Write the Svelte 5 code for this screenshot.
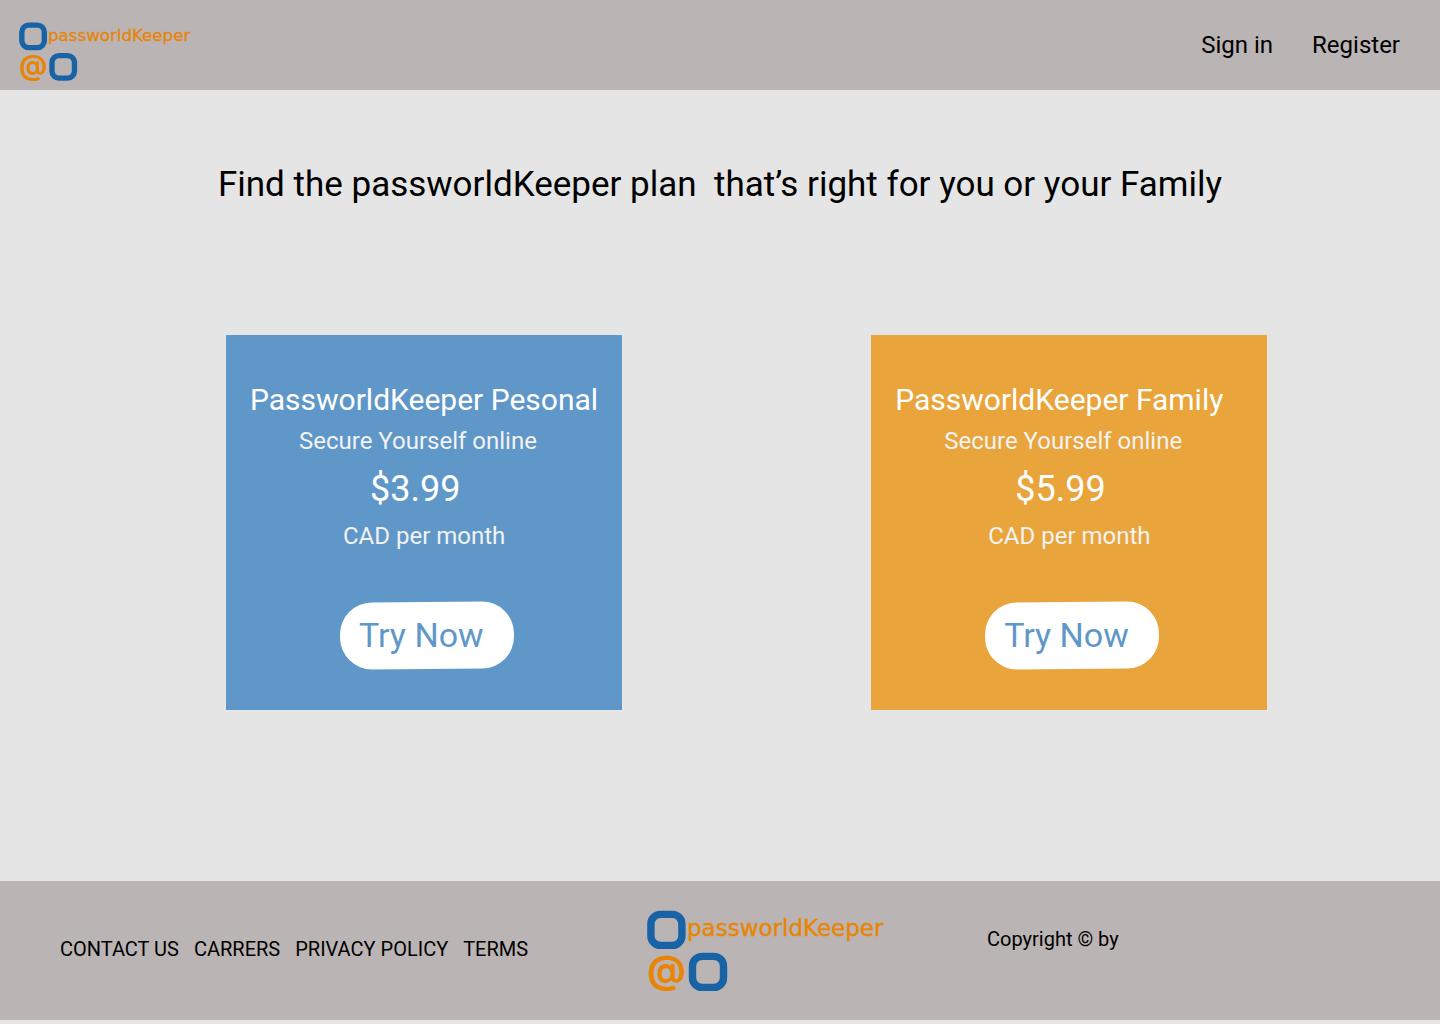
<script>
  const plans = [
    { id: 'personal', name: 'PassworldKeeper Pesonal', price: '$3.99' },
    { id: 'family', name: 'PassworldKeeper Family', price: '$5.99' },
  ];
  const footerLinks = ['CONTACT US', 'CARRERS', 'PRIVACY POLICY', 'TERMS'];
</script>

{#snippet logo()}
  <svg class="logo" viewBox="0 0 240 82" role="img" aria-label="passworldKeeper">
    <g fill="none" stroke="#1763a6" stroke-width="7.4">
      <rect x="3.9" y="4.4" width="31" height="31" rx="9.5" />
      <rect x="45.5" y="46.4" width="31" height="31" rx="9.5" />
    </g>
    <text class="at" x="19.5" y="73" text-anchor="middle">@</text>
    <text class="word" x="40" y="26">passworldKeeper</text>
  </svg>
{/snippet}

<div class="page">
  <header>
    <a class="brand" href="#home">{@render logo()}</a>
    <nav aria-label="Account">
      <a href="#signin">Sign in</a>
      <a href="#register">Register</a>
    </nav>
  </header>

  <main>
    <h1>Find the passworldKeeper plan&nbsp; that’s right for you or your Family</h1>
    <div class="plans">
      {#each plans as plan (plan.id)}
        <section class="card {plan.id}">
          <h2>{plan.name}</h2>
          <p class="tagline">Secure Yourself online</p>
          <p class="price">{plan.price}</p>
          <p class="period">CAD per month</p>
          <button type="button">Try Now</button>
        </section>
      {/each}
    </div>
  </main>

  <footer>
    <nav aria-label="Footer">
      {#each footerLinks as label}
        <a href="#{label.toLowerCase().replace(' ', '-')}">{label}</a>
      {/each}
    </nav>
    <div class="mark">{@render logo()}</div>
    <p>Copyright © by</p>
  </footer>
</div>

<style>
  :global(body) {
    background: #e5e5e5;
  }
  .page {
    box-sizing: border-box;
    min-height: 100vh;
    padding-bottom: 4px;
    display: flex;
    flex-direction: column;
    font-family: Roboto, "Liberation Sans", sans-serif;
    color: #000;
  }
  h1, h2, p {
    margin: 0;
    font-weight: 400;
  }
  a {
    color: inherit;
    text-decoration: none;
  }
  .logo {
    display: block;
    width: 100%;
    overflow: visible;
  }
  .logo text {
    fill: #e88504;
  }
  .word {
    font: 23px "DejaVu Sans", sans-serif;
    stroke: #e88504;
    stroke-width: 0.4;
  }
  .at {
    font: 700 38px Inter, sans-serif;
  }
  header {
    display: flex;
    justify-content: space-between;
    align-items: center;
    box-sizing: border-box;
    min-height: 90px;
    padding: 0 40px 0 19px;
    background: #bab4b4;
  }
  .brand {
    width: 174px;
    padding-top: 14px;
  }
  header nav {
    display: flex;
    gap: 39px;
    font-size: 24px;
    line-height: 28px;
  }
  main {
    flex: 1;
    padding: 74px 0 60px;
  }
  h1 {
    font-size: 35px;
    line-height: 42px;
    text-align: center;
  }
  .plans {
    display: flex;
    justify-content: space-between;
    gap: 40px;
    padding: 129px 12% 0 226px;
  }
  .card {
    box-sizing: border-box;
    width: 396px;
    padding: 47px 0 41px 24px;
    color: #fff;
  }
  .personal {
    background: #6097c9;
  }
  .family {
    background: #e9a53c;
  }
  h2 {
    font-size: 30px;
    line-height: 36px;
  }
  .tagline,
  .period {
    font-size: 24px;
    line-height: 28px;
    color: #f2f2f2;
  }
  .tagline {
    margin: 9px 0 0 49px;
  }
  .price {
    margin: 13px 0 0 120px;
    font-size: 36px;
    line-height: 42px;
  }
  .period {
    margin: 12px 0 0 93px;
  }
  button {
    position: relative;
    z-index: 0;
    display: block;
    width: 174px;
    height: 68px;
    margin: 51px 0 0 90px;
    padding: 0 0 0 19px;
    border: 0;
    background: none;
    color: #6097c9;
    font: 34px/68px Roboto, "Liberation Sans", sans-serif;
    text-align: left;
    cursor: pointer;
  }
  /* The pill is tilted slightly while its label stays level. */
  button::before {
    content: "";
    position: absolute;
    inset: 1px 0 0;
    z-index: -1;
    border-radius: 32px;
    background: #fff;
    transform: rotate(-0.5deg);
  }
  footer {
    display: grid;
    grid-template-columns: 587fr 340fr 393fr;
    align-items: center;
    min-height: 139px;
    padding: 0 60px;
    background: #bab4b4;
    font-size: 20px;
    line-height: 24px;
  }
  footer nav {
    display: flex;
    gap: 15px;
    padding-bottom: 4px;
  }
  footer p {
    padding-bottom: 24px;
  }
  .mark {
    width: 240px;
  }
</style>
